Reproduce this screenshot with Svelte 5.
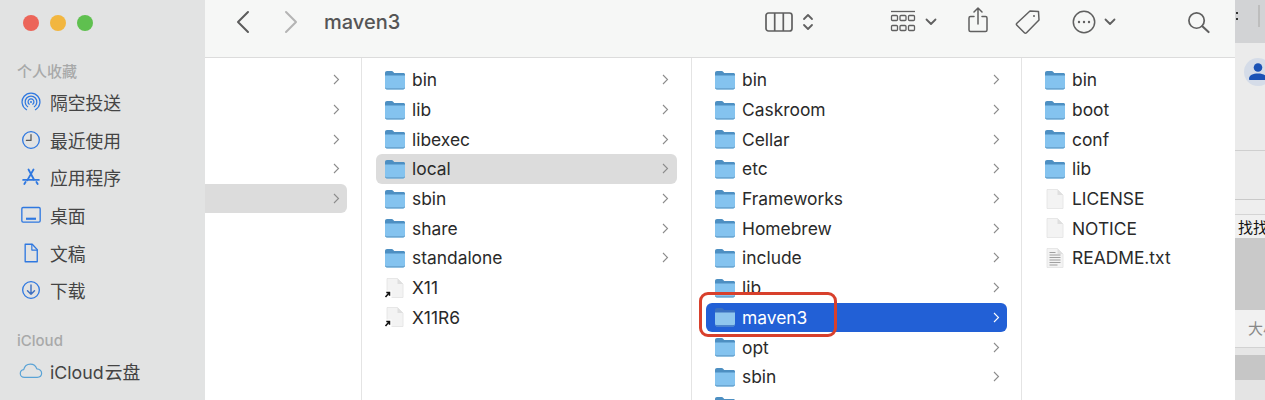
<script>
  const favourites = [
    { id: "airdrop", label: "隔空投送" },
    { id: "recent", label: "最近使用" },
    { id: "apps", label: "应用程序" },
    { id: "desktop", label: "桌面" },
    { id: "docs", label: "文稿" },
    { id: "downloads", label: "下载" },
  ];

  const hidden = [{}, {}, {}, {}, { selected: true }];

  const usr = [
    { name: "bin", type: "folder", more: true },
    { name: "lib", type: "folder", more: true },
    { name: "libexec", type: "folder", more: true },
    { name: "local", type: "folder", more: true, selected: true },
    { name: "sbin", type: "folder", more: true },
    { name: "share", type: "folder", more: true },
    { name: "standalone", type: "folder", more: true },
    { name: "X11", type: "alias" },
    { name: "X11R6", type: "alias" },
  ];

  const local = [
    "bin", "Caskroom", "Cellar", "etc", "Frameworks", "Homebrew",
    "include", "lib", "maven3", "opt", "sbin", "share",
  ].map((name) => ({ name, type: "folder", more: true, active: name === "maven3" }));

  const maven = [
    { name: "bin", type: "folder" },
    { name: "boot", type: "folder" },
    { name: "conf", type: "folder" },
    { name: "lib", type: "folder" },
    { name: "LICENSE", type: "file" },
    { name: "NOTICE", type: "file" },
    { name: "README.txt", type: "text" },
  ];

  const columns = [
    { key: "usr", rows: usr, cls: "col-usr" },
    { key: "local", rows: local, cls: "col-local" },
    { key: "maven", rows: maven, cls: "col-maven" },
  ];
</script>

{#snippet fileIcon(type, active)}
  {#if type === "folder"}
    <svg class="ficon" viewBox="0 0 22 20">
      <path d="M1 3C1 1.800 1.800 1 3 1h4.600c.8 0 1.200.3 1.800 1l.8.9H19.400c1 0 1.600.7 1.600 1.700V9H1z" fill={active ? "#3a70c0" : "#4d8fc2"} />
      <path d="M1 5.400h20v12.100c0 1.100-.7 1.900-1.900 1.900H2.900C1.700 19.400 1 18.600 1 17.500z" fill={active ? "#8fc6ee" : "#84c3ef"} />
      <path d="M1 16.800v.8c0 1.100.7 1.800 1.900 1.800h16.200c1.200 0 1.900-.7 1.900-1.800v-.8c0 .9-.6 1.400-1.500 1.400H2.500c-.9 0-1.500-.5-1.500-1.400z" fill={active ? "#3a70c0" : "#649fca"} />
    </svg>
  {:else}
    <svg class="ficon" viewBox="0 0 22 20">
      <path d="M3 .5h10.500L19 6v13.500H3z" fill="#f3f3f3" stroke="#e2e2e2" stroke-width=".8" />
      <path d="M13.500.5V6H19z" fill="#dfdfdf" />
      {#if type === "text"}
        <path d="M5.500 4.500h6M5.500 7h11M5.500 9.500h11M5.500 12h11M5.500 14.500h11M5.500 17h8" stroke="#a0a0a0" stroke-width="1.100" />
      {/if}
      {#if type === "alias"}
        <rect x="0" y="12.500" width="7.500" height="7.500" fill="#fff" />
        <path d="M1.500 19l3.500-4M2.300 14.500h3.200v3.200" stroke="#111" stroke-width="1.500" fill="none" />
      {/if}
    </svg>
  {/if}
{/snippet}

{#snippet sideIcon(id)}
  <svg class="sicon" viewBox="0 0 24 24" fill="none" stroke="#2f78e0" stroke-width="1.500" stroke-linecap="round" stroke-linejoin="round">
    {#if id === "airdrop"}
      <path d="M6.600 21.200a10.700 10.700 0 1 1 10.800 0" />
      <path d="M8 17.600a7 7 0 1 1 8 0" />
      <path d="M9.900 14.600a3.500 3.500 0 1 1 4.200 0" />
      <circle cx="12" cy="12" r="1.200" fill="#2f78e0" stroke="none" />
    {:else if id === "recent"}
      <circle cx="12" cy="12" r="10" stroke-width="1.600" />
      <path d="M12 5.500v7H6.500" stroke="#555" stroke-width="1.500" />
    {:else if id === "apps"}
      <path d="M9 3l6.500 12M15 3L7.500 16" stroke-width="2.200" />
      <path d="M2.500 15.500h19" stroke-width="2" />
      <path d="M5.500 18l-1.500 2.500M18.500 18l1.500 2.500" stroke-width="2.200" />
    {:else if id === "desktop"}
      <rect x="1" y="3" width="22" height="17.500" rx="1.500" stroke-width="1.600" />
      <path d="M6 16.500h12" stroke-width="2.600" stroke-linecap="butt" />
    {:else if id === "docs"}
      <path d="M5 1.500h8.500L19.500 8v14.500H5z" stroke-width="1.600" />
      <path d="M13 1.500V8.500H19.500" stroke-width="1.400" />
    {:else if id === "downloads"}
      <circle cx="12" cy="12" r="10" stroke-width="1.600" />
      <path d="M12 6v11M7.800 12.800l4.200 4.200 4.200-4.200" stroke-width="1.700" stroke="#3d6fc0" />
    {/if}
  </svg>
{/snippet}

<div class="screen">
  <aside class="sidebar">
    <div class="lights">
      <span class="light red"></span>
      <span class="light yellow"></span>
      <span class="light green"></span>
    </div>
    <div class="side-title first">个人收藏</div>
    {#each favourites as item}
      <div class="side-item">
        {@render sideIcon(item.id)}
        <span>{item.label}</span>
      </div>
    {/each}
    <div class="side-title second">iCloud</div>
    <div class="side-item cloud">
      <svg class="sicon wide" viewBox="0 0 26 20" fill="none" stroke="#5aa3d6" stroke-width="1.300" stroke-linejoin="round">
        <path d="M6 17.500c-2.800 0-4.600-1.900-4.600-4.200 0-2.200 1.600-3.900 3.700-4.200C5.900 5.400 8.800 3 12.300 3c3.300 0 6 2 7 5.200 2.900.2 5.200 2.300 5.200 4.900 0 2.500-2 4.400-4.800 4.400z" />
      </svg>
      <span class="cloud-label">iCloud 云盘</span>
    </div>
  </aside>

  <main class="finder">
    <header class="toolbar">
      <svg class="nav back" viewBox="0 0 14 24" fill="none" stroke="#5c5c5c" stroke-width="2" stroke-linecap="round" stroke-linejoin="round"><path d="M12 2L2 12l10 10" /></svg>
      <svg class="nav forward" viewBox="0 0 14 24" fill="none" stroke="#b4b4b4" stroke-width="2" stroke-linecap="round" stroke-linejoin="round"><path d="M2 2l10 10L2 22" /></svg>
      <h1>maven3</h1>

      <div class="tools">
        <svg class="tool view" viewBox="0 0 28 20" fill="none" stroke="#606060" stroke-width="1.700"><rect x="1" y="1" width="26" height="18" rx="2.500" /><path d="M9.700 1v18M18.300 1v18" /></svg>
        <svg class="tool updown" viewBox="0 0 12 20" fill="none" stroke="#606060" stroke-width="1.800" stroke-linecap="round" stroke-linejoin="round"><path d="M2 7l4-4 4 4M2 13l4 4 4-4" /></svg>
        <svg class="tool grid" viewBox="0 0 26 24" fill="none" stroke="#606060" stroke-width="1.300"><path d="M1 1.500h24" /><rect x="1.500" y="5.500" width="6" height="5" rx="1" /><rect x="10" y="5.500" width="6" height="5" rx="1" /><rect x="18.500" y="5.500" width="6" height="5" rx="1" /><rect x="1.500" y="15.500" width="6" height="5" rx="1" /><rect x="10" y="15.500" width="6" height="5" rx="1" /><rect x="18.500" y="15.500" width="6" height="5" rx="1" /></svg>
        <svg class="tool caret" viewBox="0 0 12 8" fill="none" stroke="#606060" stroke-width="1.800" stroke-linecap="round" stroke-linejoin="round"><path d="M1.500 1.500L6 6l4.500-4.500" /></svg>
        <svg class="tool share" viewBox="0 0 20 26" fill="none" stroke="#606060" stroke-width="1.500" stroke-linecap="round" stroke-linejoin="round"><path d="M6 9.500H2.500c-.9 0-1.500.6-1.500 1.500v12c0 .9.6 1.500 1.500 1.500h15c.9 0 1.500-.6 1.500-1.500V11c0-.9-.6-1.500-1.500-1.500H14" /><path d="M10 17V1.500M6 5l4-4 4 4" /></svg>
        <svg class="tool tag" viewBox="0 0 26 26" fill="none" stroke="#606060" stroke-width="1.500" stroke-linejoin="round"><path d="M15 2l8.500.5.500 8.500-12.500 12.800c-.6.600-1.500.600-2.100 0l-7.500-7.500c-.6-.6-.6-1.500 0-2.100z" /><circle cx="19" cy="7" r="1" fill="#606060" stroke="none" /></svg>
        <svg class="tool more" viewBox="0 0 24 24" fill="none" stroke="#606060" stroke-width="1.500"><circle cx="12" cy="12" r="10.700" /><circle cx="7" cy="12" r="1.200" fill="#606060" stroke="none" /><circle cx="12" cy="12" r="1.200" fill="#606060" stroke="none" /><circle cx="17" cy="12" r="1.200" fill="#606060" stroke="none" /></svg>
        <svg class="tool caret tight" viewBox="0 0 12 8" fill="none" stroke="#606060" stroke-width="1.800" stroke-linecap="round" stroke-linejoin="round"><path d="M1.500 1.500L6 6l4.500-4.500" /></svg>
        <svg class="tool search" viewBox="0 0 24 24" fill="none" stroke="#606060" stroke-width="1.800" stroke-linecap="round"><circle cx="10" cy="10" r="8" /><path d="M16 16l6.500 6" stroke-width="2.200" /></svg>
      </div>
    </header>

    <div class="browser">
      <div class="column col-root">
        {#each hidden as row}
          <div class="row root-row" class:selected={row.selected}>
            <svg class="chev" viewBox="0 0 7 11" fill="none" stroke="#8c8c8c" stroke-width="1.100"><path d="M1 1l4.500 4.500L1 10" /></svg>
          </div>
        {/each}
      </div>
      {#each columns as col (col.key)}
        <div class="column {col.cls}">
          {#each col.rows as row}
            <div class="row" class:selected={row.selected} class:active={row.active}>
              {@render fileIcon(row.type, row.active)}
              <span class="name">{row.name}</span>
              {#if row.more}
                <svg class="chev" viewBox="0 0 7 11" fill="none" stroke={row.active ? "#fff" : "#8c8c8c"} stroke-width="1.100"><path d="M1 1l4.500 4.500L1 10" /></svg>
              {/if}
            </div>
          {/each}
        </div>
      {/each}
    </div>

    <div class="callout"></div>
  </main>

  <div class="behind">
    <div class="band b-top"><i class="dots"></i><i class="bar"></i></div>
    <div class="band b-avatar">
      <svg class="avatar" viewBox="0 0 28 28"><circle cx="14" cy="14" r="14" fill="#d5dce8" /><circle cx="14" cy="9.500" r="4.300" fill="#1b52b5" /><path d="M5 21c0-4 4-5.500 9-5.500s9 1.500 9 5.500c0 .7-.5 1-1 1H6c-.5 0-1-.3-1-1z" fill="#1b52b5" /></svg>
    </div>
    <div class="band b-mid"></div>
    <div class="band b-thin"></div>
    <div class="band b-text">找找</div>
    <div class="band b-grey"></div>
    <div class="band b-input">大小</div>
    <div class="band b-thin2"></div>
    <div class="band b-grey2"></div>
    <div class="band b-end"></div>
  </div>
</div>

<style>
  :global(body) {
    margin: 0;
    background: #fff;
  }

  .screen {
    display: flex;
    width: 1265px;
    height: 400px;
    overflow: hidden;
    font-family: Inter, "Noto Sans CJK SC", sans-serif;
    position: relative;
  }

  /* sidebar */
  .sidebar {
    width: 205px;
    flex: none;
    background: #e2e3e3;
    color: #444;
  }

  .lights {
    display: flex;
    gap: 11px;
    padding: 15px 0 0 23px;
    height: 16px;
  }

  .light {
    width: 16px;
    height: 16px;
    border-radius: 50%;
  }

  .red { background: #ec6559; }
  .yellow { background: #f2b63f; }
  .green { background: #5fc04f; }

  .side-title {
    height: 20px;
    line-height: 20px;
    padding-left: 17px;
    font-size: 15px;
    font-weight: 500;
    color: #a8a9a9;
  }

  .first { margin-top: 30.500px; margin-bottom: 2px; }
  .second { margin-top: 22px; margin-bottom: 1px; }

  .side-item {
    display: flex;
    align-items: center;
    height: 37.600px;
    padding-left: 21px;
    font-size: 17.800px;
    gap: 9px;
  }

  .sicon {
    width: 20px;
    height: 20px;
    flex: none;
  }

  .sicon.wide {
    width: 24px;
    height: 19px;
    margin-left: -2px;
    margin-right: -2px;
  }

  .cloud-label {
    word-spacing: -4px;
  }

  /* finder window */
  .finder {
    width: 1030px;
    flex: none;
    display: flex;
    flex-direction: column;
    background: #fff;
    position: relative;
  }

  .toolbar {
    height: 58px;
    box-sizing: border-box;
    flex: none;
    display: flex;
    align-items: center;
    padding-bottom: 13px;
    background: #f6f7f6;
    border-bottom: 1px solid #dcdcdc;
  }

  .nav {
    width: 14px;
    height: 24px;
  }

  .back { margin-left: 31px; }
  .forward { margin-left: 34px; }

  h1 {
    margin: 0 0 0 26px;
    font-size: 20px;
    font-weight: 500;
    color: #555;
  }

  .tools {
    display: flex;
    align-items: center;
    margin-left: auto;
    padding-right: 25px;
  }

  .tool { flex: none; }
  .view { width: 28px; height: 20px; }
  .updown { width: 12px; height: 20px; margin-left: 9px; }
  .grid { width: 26px; height: 24px; margin-left: 76px; }
  .caret { width: 12px; height: 8px; margin-left: 9px; }
  .share { width: 20px; height: 26px; margin-left: 31px; margin-top: -4px; }
  .tag { width: 26px; height: 26px; margin-left: 27px; }
  .more { width: 24px; height: 24px; margin-left: 31px; }
  .caret.tight { margin-left: 8px; }
  .search { width: 23px; height: 23px; margin-left: 71px; }

  /* columns */
  .browser {
    flex: 1;
    display: flex;
    min-height: 0;
  }

  .column {
    box-sizing: border-box;
    padding: 7px 14px 0;
    flex: none;
    border-right: 1px solid #e4e4e4;
  }

  .col-root { width: 157px; padding-left: 0; }
  .col-usr, .col-local { width: 330px; }
  .col-maven { flex: 1; border-right: none; }

  .row {
    display: flex;
    align-items: center;
    height: 29.700px;
    padding: 0 8px 0 7.500px;
    border-radius: 6px;
    font-size: 17.400px;
    color: #2a2a2a;
  }

  .col-local .row { padding-right: 7px; }

  .root-row {
    justify-content: flex-end;
    padding-right: 7px;
    border-radius: 0 6px 6px 0;
  }

  .selected { background: #dcdcdc; }

  .active {
    background: #2260d6;
    color: #fff;
  }

  .ficon {
    width: 22px;
    height: 20px;
    flex: none;
    margin-right: 6.500px;
  }

  .name { flex: 1; }

  .chev {
    width: 7px;
    height: 11px;
    flex: none;
  }

  .callout {
    position: absolute;
    left: 494px;
    top: 292px;
    width: 138px;
    height: 45px;
    box-sizing: border-box;
    border: 3px solid #d8402c;
    border-radius: 9px;
  }

  /* what shows behind the window */
  .behind {
    flex: 1;
    min-width: 0;
    overflow: hidden;
    background: #e8e8e8;
  }

  .band { box-sizing: border-box; }
  .b-top { height: 43px; background: #d2d3d5; position: relative; }
  .dots {
    position: absolute;
    left: 1px;
    top: 12px;
    width: 2px;
    height: 2px;
    background: #333;
    box-shadow: 0 6px 0 #333;
  }
  .bar {
    position: absolute;
    left: 23px;
    top: 5px;
    width: 2px;
    height: 22px;
    background: #bdbdbd;
  }
  .b-avatar { height: 108px; padding: 15px 0 0 9px; border-bottom: 1px solid #cfcfcf; background: #ebebeb; }
  .avatar { width: 28px; height: 28px; display: block; }
  .b-mid { height: 49px; border-bottom: 1px solid #c9c9c9; background: #ebebeb; }
  .b-thin { height: 15px; background: #eeeeee; border-bottom: 1px solid #d4d4d4; }
  .b-text {
    height: 23px;
    line-height: 20px;
    padding: 3px 0 0 3px;
    font-size: 15px;
    white-space: nowrap;
    color: #111;
    background: #f0f0f0;
  }
  .b-grey { height: 72px; background: #c9c9c9; }
  .b-input {
    height: 37px;
    line-height: 37px;
    padding-left: 13px;
    font-size: 15px;
    white-space: nowrap;
    color: #888;
    background: #f1f1f1;
  }
  .b-thin2 { height: 8px; background: #e6e6e6; border-top: 1px solid #d2d2d2; }
  .b-grey2 { height: 25px; background: #c6c6c6; }
  .b-end { height: 20px; background: #e4e4e4; }
</style>
